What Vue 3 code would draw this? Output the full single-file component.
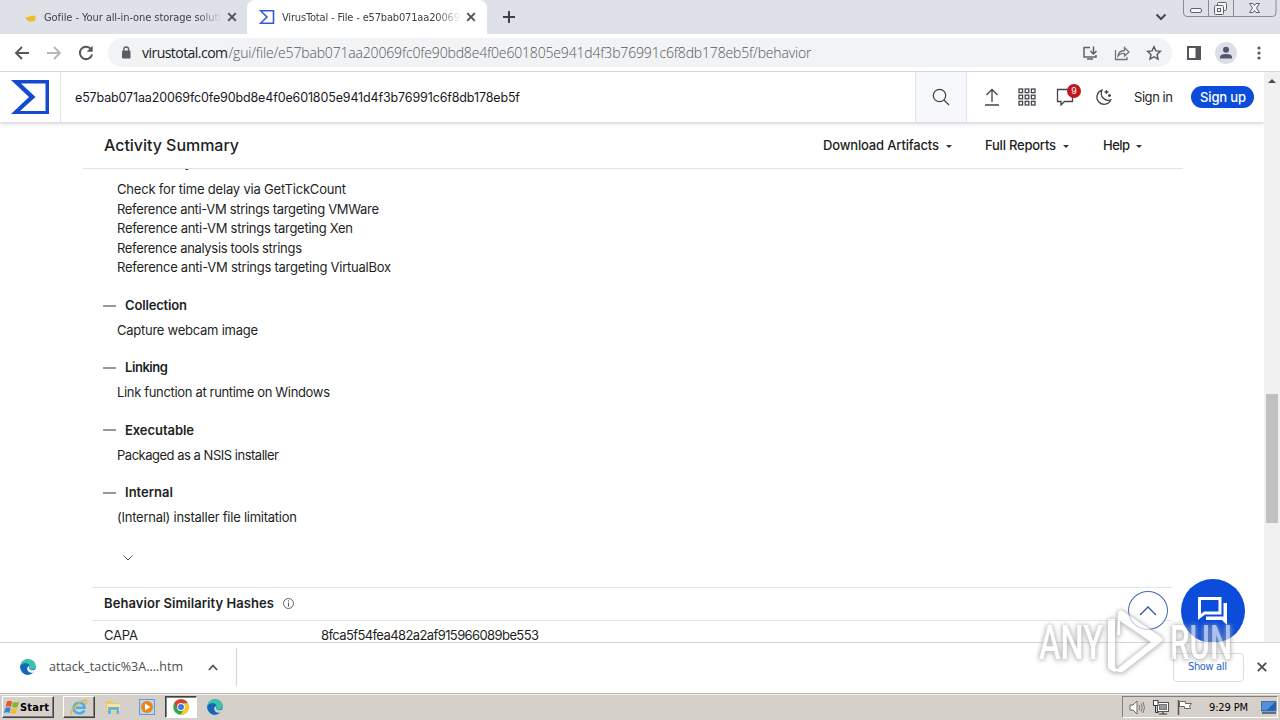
<script setup>
const anti = [
  ['Check for time delay via GetTickCount', 229],
  ['Reference anti-VM strings targeting VMWare', 262],
  ['Reference anti-VM strings targeting Xen', 236],
  ['Reference analysis tools strings', 185],
  ['Reference anti-VM strings targeting VirtualBox', 274],
]
const sections = [
  { name: 'Collection', w: 62, item: 'Capture webcam image', iw: 141 },
  { name: 'Linking', w: 43, item: 'Link function at runtime on Windows', iw: 213 },
  { name: 'Executable', w: 69, item: 'Packaged as a NSIS installer', iw: 162 },
  { name: 'Internal', w: 48, item: '(Internal) installer file limitation', iw: 180 },
]
const hash = 'e57bab071aa20069fc0fe90bd8e4f0e601805e941d4f3b76991c6f8db178eb5f'

// Tracks text so that a label takes exactly the given width.
const vFit = {
  mounted(el, { value }) {
    const range = document.createRange()
    range.selectNodeContents(el)
    const natural = range.getBoundingClientRect().width
    const count = el.textContent.length
    if (count > 1) el.style.letterSpacing = `${(value - natural) / (count - 1)}px`
  },
}
</script>

<template>
  <div class="screen">
    <div class="tabs">
      <div class="tab idle">
        <svg class="fav" width="16" height="16" viewBox="0 0 16 16"><path d="M3.500 8.500Q7 7.500 12 6.500q1.800-.3 1.700 1.500 0 4-3 4.500H7q-2-.8-3.500-4z" fill="#edbd23" /><path d="M4.500 5.500l6.500 1" stroke="#f5e3ad" /></svg>
        <span class="title"><span v-fit="177">Gofile - Your all-in-one storage soluti</span></span>
        <svg class="x" width="10" height="10" viewBox="0 0 10 10"><path d="M1.200 1.200l7.600 7.600M8.800 1.200L1.200 8.800" /></svg>
      </div>
      <div class="tab active">
        <svg class="fav" width="16" height="16" viewBox="0 0 16 16"><path d="M1.500 1.700h13v12.600h-13L8 8z" fill="none" stroke="#3559d8" stroke-width="1.600" /></svg>
        <span class="title"><span v-fit="178">VirusTotal - File - e57bab071aa20069</span></span>
        <svg class="x" width="10" height="10" viewBox="0 0 10 10"><path d="M1.200 1.200l7.600 7.600M8.800 1.200L1.200 8.800" /></svg>
      </div>
      <svg class="plus" width="12" height="12" viewBox="0 0 12 12"><path d="M6 0v12M0 6h12" stroke="#3c4043" stroke-width="2" /></svg>
      <svg class="tabmenu" width="12" height="8" viewBox="0 0 12 8"><path d="M1.500 1.500L6 6l4.500-4.500" fill="none" stroke="#45484d" stroke-width="2" /></svg>
      <svg class="winbtns" width="94" height="17" viewBox="0 0 94 17">
        <path d="M.5 0v13q0 3.500 3.500 3.500h85.500q3.500 0 3.500-3.500V0M25.500 0v16.500M50.500 0v16.500" fill="none" stroke="#858b94" />
        <g fill="#f5f6f8" stroke="#5b616b">
          <rect x="7.500" y="8.500" width="11" height="4" rx="1.500" />
          <rect x="34.500" y="2.500" width="9" height="8" rx="1" /><rect x="31.500" y="5.500" width="9" height="9" rx="1" /><rect x="34.500" y="8.500" width="3" height="3" />
          <path d="M66.500 3.500h3.500l1.500 2 1.500-2h3.500L73.500 8l3 4.500H73l-1.500-2-1.500 2h-3.500l3-4.500z" />
        </g>
      </svg>
    </div>

    <div class="toolbar">
      <svg class="back" width="16" height="14" viewBox="0 0 16 14"><path d="M15 7H2M8 1L2 7l6 6" fill="none" stroke="#55595e" stroke-width="1.900" /></svg>
      <svg class="fwd" width="16" height="14" viewBox="0 0 16 14"><path d="M1 7h13M8 1l6 6-6 6" fill="none" stroke="#b5b8bc" stroke-width="1.900" /></svg>
      <svg class="reload" width="16" height="16" viewBox="0 0 16 16"><path d="M13.300 4.500A6.200 6.200 0 1 0 14.100 9.500" fill="none" stroke="#55595e" stroke-width="2" /><path d="M14.700 .8v6h-6z" fill="#55595e" /></svg>
      <div class="omni">
        <svg width="10" height="13" viewBox="0 0 10 13"><rect x="1" y="4.500" width="8.500" height="8" rx="1" fill="#5b5e63" /><path d="M2.800 5V3.200q0-2.200 2.400-2.200t2.400 2.200V5" fill="none" stroke="#5b5e63" stroke-width="1.300" /></svg>
        <span class="url"><span class="host" v-fit="86">virustotal.com</span><span v-fit="583">/gui/file/{{ hash }}/behavior</span></span>
        <svg class="o1" width="16" height="16" viewBox="0 0 16 16"><path d="M8 2.500H2v9.500h12v-2M5 14h6" fill="none" stroke="#5f6368" stroke-width="1.500" /><path d="M11.500 1.500v7M8.500 6l3 3 3-3" fill="none" stroke="#5f6368" stroke-width="1.500" /></svg>
        <svg class="o2" width="16" height="16" viewBox="0 0 16 16"><path d="M1.500 5v9.500H13V12" fill="none" stroke="#73777c" stroke-width="1.300" /><path d="M4 11q.5-5 6.500-5.500V2.500L15 7l-4.500 4V8.500Q6.500 8 4 11z" fill="none" stroke="#73777c" stroke-width="1.300" /></svg>
        <svg class="o3" width="16" height="16" viewBox="0 0 16 16"><path d="M8 1.700l1.900 4.200 4.500.5-3.300 3.100.9 4.500L8 11.700 4 14l.9-4.500-3.300-3.100 4.500-.5z" fill="none" stroke="#55595e" stroke-width="1.400" /></svg>
      </div>
      <svg class="panel" width="14" height="14" viewBox="0 0 14 14"><rect x="1" y="1" width="12" height="12" fill="none" stroke="#55555a" stroke-width="2" /><path d="M8.500 1H13v12H8.500z" fill="#55555a" /></svg>
      <svg class="avatar" width="22" height="22" viewBox="0 0 22 22"><circle cx="11" cy="11" r="11" fill="#dcdfe5" /><circle cx="11" cy="7.800" r="3" fill="#4f586b" /><path d="M5 16.500v-1.500q0-3 6-3t6 3v1.500z" fill="#4f586b" /></svg>
      <svg class="dots" width="4" height="14" viewBox="0 0 4 14" fill="#55595e"><circle cx="2" cy="2" r="1.600" /><circle cx="2" cy="7" r="1.600" /><circle cx="2" cy="12" r="1.600" /></svg>
    </div>

    <div class="view">
      <main class="page">
        <header class="vt">
          <div class="logo"><svg width="38" height="34" viewBox="0 0 38 34"><path d="M0 0h38v34H0l18-17zM10 3.500L24.500 17 9 31h25.500V3.500z" fill="#1549cf" fill-rule="evenodd" /></svg></div>
          <div class="query"><span v-fit="445">{{ hash }}</span></div>
          <div class="search"><svg width="18" height="18" viewBox="0 0 18 18"><circle cx="7.500" cy="7.500" r="6.200" /><path d="M12 12l5 5" /></svg></div>
          <div class="actions">
            <svg class="a1" width="16" height="18" viewBox="0 0 16 18"><path d="M1 17h14M8 14V1.500M2.500 7L8 1.500 13.500 7" /></svg>
            <svg class="a2" width="18" height="18" viewBox="0 0 18 18"><g v-for="r in 3" :key="r"><rect v-for="c in 3" :key="c" :x="c * 6.200 - 5.200" :y="r * 6.200 - 5.200" width="3.600" height="3.600" /></g></svg>
            <div class="chat"><svg width="18" height="18" viewBox="0 0 18 18"><path d="M1.500 1.500h15v12H8.500L5 17v-3.500H1.500z" /></svg><b>9</b></div>
            <svg class="a4" width="17" height="17" viewBox="0 0 17 17"><path d="M7 1.200A7.200 7.200 0 1 0 15.800 10.800 7 7 0 0 1 7 1.200z" /><path d="M11.500 1v4M9.500 3h4M14.500 5v3M13 6.500h3" /></svg>
            <span class="signin" v-fit="39">Sign in</span>
            <span class="signup"><span v-fit="46">Sign up</span></span>
          </div>
        </header>

        <div class="summary">
          <h1><span v-fit="135">Activity Summary</span></h1>
          <span class="drop d1"><span v-fit="116">Download Artifacts</span><i></i></span>
          <span class="drop d2"><span v-fit="71">Full Reports</span><i></i></span>
          <span class="drop d3"><span v-fit="27">Help</span><i></i></span>
        </div>

        <div class="body">
          <section class="first">
            <h2><i></i><span v-fit="85">Anti-Analysis</span></h2>
            <p v-for="a in anti" :key="a[0]"><span v-fit="a[1]">{{ a[0] }}</span></p>
          </section>
          <section v-for="s in sections" :key="s.name">
            <h2><i></i><span v-fit="s.w">{{ s.name }}</span></h2>
            <p><span v-fit="s.iw">{{ s.item }}</span></p>
          </section>
          <svg class="more" width="10" height="6" viewBox="0 0 10 6"><path d="M.5 .5L5 5 9.500 .5" fill="none" stroke="#555" /></svg>
          <div class="hashes">
            <h3><span v-fit="170">Behavior Similarity Hashes</span>
              <svg width="11" height="11" viewBox="0 0 11 11"><circle cx="5.500" cy="5.500" r="5" fill="none" stroke="#555" stroke-width=".9" /><path d="M5.500 4.700V8.500M5.500 2.500v1.200" stroke="#555" /></svg>
            </h3>
            <div class="row"><span class="key"><span v-fit="34">CAPA</span></span><span v-fit="218">8fca5f54fea482a2af915966089be553</span></div>
          </div>
        </div>

        <div class="totop"><svg width="18" height="10" viewBox="0 0 18 10"><path d="M1 9l8-8 8 8" fill="none" stroke="#2f58a8" stroke-width="1.300" /></svg></div>
        <div class="fab"><svg width="32" height="30" viewBox="0 0 32 30"><path d="M2.500 2.500h20.500v14.500H7.500L2.500 21z" fill="none" stroke="#fff" stroke-width="3" /><path d="M26.500 7H30v22l-5-5H9v-3.500h17.500z" fill="#fff" /></svg></div>
      </main>
      <div class="scroll"><i class="up"></i><div class="thumb"></div></div>
    </div>

    <div class="shelf">
      <svg class="edge" width="16" height="16" viewBox="0 0 16 16"><circle cx="8" cy="8" r="7.800" fill="#1d83d4" /><path d="M.3 7Q1 .3 8 .2q7.500.3 7.700 7-.4 3-4 3.200-3 0-2-2.400Q9.800 4.500 5.500 4.300 2 4.500.3 7z" fill="#3dc4a4" /><path d="M.3 7Q2 3.800 5.800 4.200 9 4.700 9.300 7q-3 .5-2.300 3.500Q8 14 12 14 8 17 4 14.700.2 12 .3 7z" fill="#1467b7" /><path d="M9.400 7q-1.500 3 2 4.200 2 .4 3.600-.8l1 .3-1.300 2.500Q9 15 7.300 10.500 6.800 8 9.400 7z" fill="#fff" /></svg>
      <span class="file"><span v-fit="134">attack_tactic%3A....htm</span></span>
      <svg class="caret" width="10" height="7" viewBox="0 0 10 7"><path d="M.8 6L5 1.600 9.200 6" fill="none" stroke="#55595e" stroke-width="1.700" /></svg>
      <div class="sep"></div>
      <div class="showall"><span v-fit="39">Show all</span></div>
      <svg class="x close" width="10" height="10" viewBox="0 0 10 10"><path d="M.8 .8l8.400 8.400M9.200 .8L.8 9.200" /></svg>
    </div>

    <div class="taskbar">
      <div class="start">
        <svg width="16" height="16" viewBox="0 0 16 16"><path d="M3 2.500q2.500-1.500 5 0L7 8Q4.500 6.500 1.500 8z" fill="#e9542b" /><path d="M9 3q3 1 6-.5L13.500 8Q11 9.300 8 8z" fill="#7fb82c" /><path d="M1.300 9q3-1.500 5.500 0l-1.200 5Q3 12.500 0 14z" fill="#3487d7" /><path d="M7.800 9.300q2.700 1.300 5.500-.3L12 14q-3 1.500-5.500 0z" fill="#f4bd24" /></svg>
        <span v-fit="29">Start</span>
      </div>
      <div class="task ie"><svg width="18" height="18" viewBox="0 0 18 18"><path d="M14.300 12.500Q12.500 15.500 9 15.300 4 14.800 3.700 10 4.200 5 9.200 4.700 14.500 5 14.500 9.800H6" fill="none" stroke="#4aaeea" stroke-width="2.600" /><path d="M2 16.500Q-.5 13 7 6.500 15 .5 16.500 3q.3 1.500-1 3" fill="none" stroke="#e6b62e" stroke-width="1.400" /></svg></div>
      <div class="task"><svg width="16" height="16" viewBox="0 0 16 16"><path d="M1 2h6l1 2h6v9H1z" fill="#e7ca65" /><path d="M2 5h13v7H2z" fill="#f5e49a" /><path d="M3 8h11v7h-2.500v-4H6v4H3z" fill="#66b4df" /></svg></div>
      <div class="task"><svg width="16" height="16" viewBox="0 0 16 16"><rect x=".5" y=".5" width="15" height="15" fill="#b9d7ef" stroke="#639bcf" /><circle cx="8" cy="8" r="6" fill="#ef8315" /><path d="M6 4.500v7l5.500-3.500z" fill="#fff" /></svg></div>
      <div class="task chrome"><svg width="16" height="16" viewBox="0 0 16 16"><circle cx="8" cy="8" r="7.800" fill="#2da94f" /><path d="M1.200 4.200A7.800 7.800 0 0 1 14.800 4.200H8L4.700 10z" fill="#e33b2e" /><path d="M14.800 4.200A7.800 7.800 0 0 1 7.500 15.800L11.300 10 11 4.200z" fill="#fcc822" /><circle cx="8" cy="8" r="3.900" fill="#fff" /><circle cx="8" cy="8" r="3" fill="#3e7ae8" /></svg></div>
      <div class="task"><svg width="16" height="16" viewBox="0 0 16 16"><circle cx="8" cy="8" r="7.800" fill="#1d83d4" /><path d="M.3 7Q1 .3 8 .2q7.500.3 7.700 7-.4 3-4 3.200-3 0-2-2.400Q9.800 4.500 5.500 4.300 2 4.500.3 7z" fill="#3dc4a4" /><path d="M.3 7Q2 3.800 5.800 4.200 9 4.700 9.300 7q-3 .5-2.300 3.500Q8 14 12 14 8 17 4 14.700.2 12 .3 7z" fill="#1467b7" /><path d="M9.400 7q-1.500 3 2 4.200 2 .4 3.600-.8l1 .3-1.300 2.500Q9 15 7.300 10.500 6.800 8 9.400 7z" fill="#d5d1ca" /></svg></div>
      <div class="tray">
        <svg class="t1" width="16" height="15" viewBox="0 0 16 15"><path d="M1 5h3l4-4v13l-4-4H1z" fill="#fff" stroke="#666" /><path d="M10 5q1.500 2.500 0 5M12 3.500q2.500 4 0 8M14 2q3 5.500 0 11" fill="none" stroke="#777" /></svg>
        <svg class="t2" width="16" height="15" viewBox="0 0 16 15"><rect x="4.500" y="2.500" width="11" height="9" fill="#fff" stroke="#555" /><rect x="6.500" y="4.500" width="7" height="5" fill="#999" stroke="#777" /><path d="M6 14h8M10 12v2" stroke="#333" /><path d="M2.500 5v7.500h3" fill="none" stroke="#333" /><rect x=".5" y=".5" width="4.500" height="5" fill="#fff" stroke="#444" /></svg>
        <svg class="t3" width="16" height="15" viewBox="0 0 16 15"><path d="M1.500 0v15" stroke="#555" stroke-width="1.500" /><path d="M2.500 1.500h6v2h6L12.500 6l1 2.500H7.500v-2h-5z" fill="#fff" stroke="#666" /></svg>
        <span class="time"><span v-fit="39">9:29 PM</span></span>
        <svg class="t4" width="16" height="13" viewBox="0 0 16 13"><path d="M.5 .5h14.500v9.500H.5z" fill="#2361b6" stroke="#4d6c93" /><path d="M1 1h13L6 9H1z" fill="#4f91dc" /><path d="M1 12h14" stroke="#384e70" stroke-width="1.500" /></svg>
      </div>
    </div>

    <svg class="mark" width="200" height="66" viewBox="0 0 200 66">
      <text x="3" y="50" textLength="64" lengthAdjust="spacingAndGlyphs">ANY</text>
      <path d="M72 12q0-2 3-2h4v48l3 3q-2 3-6 1l-4-3zM82 3q3-3 6 0l37 25q3 3 0 5L88 62q-5 3-8-1l35-28-31-21v14h-3z" />
      <text x="134" y="50" textLength="62" lengthAdjust="spacingAndGlyphs">RUN</text>
    </svg>
  </div>
</template>

<style>
html, body { margin: 0; overflow: hidden; }
</style>

<style scoped>
.screen { position: relative; width: 1280px; height: 720px; overflow: hidden; display: flex; flex-direction: column; background: #fff; font-family: Inter, "Liberation Sans", sans-serif; white-space: nowrap; }
.screen * { box-sizing: border-box; }
svg { flex: none; display: block; }
h1, h2, h3, p { margin: 0; }

.tabs { height: 34px; flex: none; display: flex; align-items: center; background: #dee1e8; font: 11px "DejaVu Sans Condensed", "DejaVu Sans", sans-serif; font-stretch: condensed; color: #3f4247; }
.tab { height: 34px; display: flex; align-items: center; }
.idle { width: 247px; padding-left: 22px; }
.active { width: 240px; padding-left: 12px; background: #fff; border-radius: 8px 8px 0 0; color: #3c4043; }
.title { width: 178px; margin-left: 6px; overflow: hidden; -webkit-mask-image: linear-gradient(90deg, #000 86%, transparent); mask-image: linear-gradient(90deg, #000 86%, transparent); }
.active .title { width: 179px; margin-left: 7px; }
.x { stroke: #4d5055; stroke-width: 1.9; fill: none; margin-left: 5px; }
.plus { margin-left: 16px; }
.tabmenu { margin-left: 640px; }
.winbtns { margin-left: 16px; align-self: flex-start; }

.toolbar { height: 38px; flex: none; display: flex; align-items: center; border-bottom: 1px solid #d3d5d8; padding-left: 14px; }
.fwd { margin-left: 16px; }
.reload { margin-left: 16px; }
.omni { width: 1064px; height: 29px; margin-left: 14px; border-radius: 15px; background: #f1f3f4; display: flex; align-items: center; padding-left: 13px; }
.url { margin-left: 11px; width: 939px; font: 300 14px "Open Sans", "Noto Sans", sans-serif; color: #53575c; display: flex; }
.host { color: #202328; font-weight: 400; margin-right: 1px; }
.o1 { margin-left: 1px; }
.o2, .o3 { margin-left: 16px; }
.panel { margin-left: 15px; }
.avatar { margin-left: 14px; }
.dots { margin-left: 20px; }

.view { height: 570px; flex: none; display: flex; }
.page { position: relative; width: 1264px; height: 570px; overflow: hidden; color: #1d1f24; font-size: 13px; }
.vt { position: relative; z-index: 3; height: 50px; display: flex; background: #fff; box-shadow: 0 1px 4px rgba(60, 64, 80, .3); }
.logo { width: 61px; border-right: 1px solid #dfe2ec; display: flex; align-items: center; padding-left: 11px; }
.query { width: 854px; padding-left: 14px; line-height: 51px; color: #17191e; font-size: 12.5px; }
.search { width: 52px; border: solid #dfe3ec; border-width: 0 1px; background: #f6f8fc; display: flex; align-items: center; justify-content: center; padding-right: 1px; }
.search svg, .actions svg { fill: none; stroke: #43464d; stroke-width: 1.3; }
.actions { display: flex; align-items: center; padding-left: 17px; }
.a2 { margin-left: 18px; }
.chat { position: relative; margin-left: 20px; width: 18px; }
.chat b { position: absolute; left: 11px; top: -4px; width: 14px; height: 14px; border-radius: 50%; background: #c4161c; color: #fff; font-size: 9px; line-height: 14px; text-align: center; font-weight: 400; }
.a4 { margin-left: 21px; }
.signin { margin-left: 22px; width: 39px; }
.signup { margin-left: 18px; width: 63px; height: 22px; border-radius: 11px; background: #0b4dda; color: #fff; line-height: 22px; padding-left: 9px; font-weight: 500; }

.summary { position: relative; z-index: 2; height: 47px; width: 1100px; margin-left: 83px; background: #fff; border-bottom: 1px solid #e3e4e8; display: flex; align-items: center; padding: 0 0 0 21px; }
h1 { width: 719px; font-size: 16px; font-weight: 500; }
.drop { display: flex; align-items: center; font-weight: 450; font-size: 13px; }
.drop i { border: solid transparent; border-width: 3px 3px 0; border-top-color: #333; margin: 2px 0 0 7px; }
.d1 { width: 162px; }
.d2 { width: 118px; }

.body { margin-top: -15.8px; padding-left: 104px; }
section { padding-bottom: 17.83px; line-height: 19.5px; }
.first { padding-bottom: 18.3px; }
h2 { display: flex; align-items: center; height: 19.5px; margin-bottom: 5.5px; font-size: 13px; font-weight: 600; line-height: 19.5px; }
.first h2 { margin-bottom: 7.5px; }
h2 i { width: 13px; height: 2px; background: #96989b; margin: 0 9px 0 -1px; }
p { height: 19.5px; padding-left: 13px; }
.more { margin: 10px 0 0 19px; }
.hashes { margin: 25.3px 0 0 -12px; width: 1080px; border-top: 1px solid #e3e4e8; }
h3 { height: 33px; display: flex; align-items: center; padding: 0 0 1px 12px; font-size: 13px; font-weight: 600; border-bottom: 1px solid #e3e4e8; }
h3 svg { margin-left: 9px; }
.row { display: flex; padding-left: 12px; height: 30px; line-height: 29px; }
.key { width: 217px; }
.totop { position: absolute; left: 1128px; top: 519px; width: 40px; height: 39px; border: 1px solid #4668b8; border-radius: 50%; background: #fff; display: flex; align-items: center; justify-content: center; }
.fab { position: absolute; left: 1181px; top: 507px; width: 64px; height: 64px; border-radius: 50%; background: #0b4dda; display: flex; align-items: center; justify-content: center; }
.scroll { width: 16px; background: #f1f1f1; display: flex; flex-direction: column; align-items: center; }
.up { border: solid transparent; border-width: 0 4px 4px; border-bottom-color: #505050; margin-top: 7px; }
.thumb { width: 12px; height: 129px; margin-top: 311px; background: #c1c1c1; }

.shelf { height: 51px; flex: none; border-top: 1px solid #d5d6d9; display: flex; align-items: center; padding: 0 0 2px 20px; color: #484b50; }
.file { width: 134px; margin: -2px 0 0 13px; font: 12.5px "Open Sans", "Noto Sans", sans-serif; }
.caret { margin-left: 25px; }
.sep { width: 1px; height: 38px; background: #d3d5d8; margin-left: 18px; }
.showall { width: 71px; height: 29px; margin-left: 936px; border: 1px solid #dadce0; border-radius: 4px; padding-left: 14px; font: 11px/26px "DejaVu Sans Condensed", "DejaVu Sans", sans-serif; font-stretch: condensed; color: #1f63c6; }
.close { margin-left: 13px; }

.taskbar { height: 27px; flex: none; background: #d5d0c9; border-top: 1px solid #bab7b2; box-shadow: inset 0 1px #f4f2ee; display: flex; padding: 2px 2px 0 2px; font: 11px "DejaVu Sans Condensed", "DejaVu Sans", sans-serif; font-stretch: condensed; color: #000; }
.start, .ie, .chrome { border: 1px solid; border-color: #fff #404040 #404040 #fff; box-shadow: inset -1px -1px #808080; }
.start { width: 52px; height: 22px; display: flex; align-items: center; padding-left: 1px; font-weight: 700; }
.task { width: 32px; height: 22px; margin-left: 2px; display: flex; align-items: center; justify-content: center; }
.ie { margin-left: 9px; }
.chrome { background: #fff; border-color: #404040 #fff #fff #404040; box-shadow: inset 1px 1px #808080; }
.tray { margin-left: auto; width: 156px; height: 22px; border: 1px solid; border-color: #808080 #fff #fff #808080; display: flex; align-items: center; padding-left: 6px; }
.t2, .t3 { margin-left: 8px; }
.time { margin-left: 16px; width: 40px; }
.t4 { margin-left: 12px; }
.mark { position: absolute; left: 1036px; top: 609px; fill: #fff; opacity: .65; filter: drop-shadow(0 0 2px #999) drop-shadow(0 1px 2px #aaa); overflow: visible; }
.mark text { font: 500 49px "Roboto", sans-serif; }
</style>
